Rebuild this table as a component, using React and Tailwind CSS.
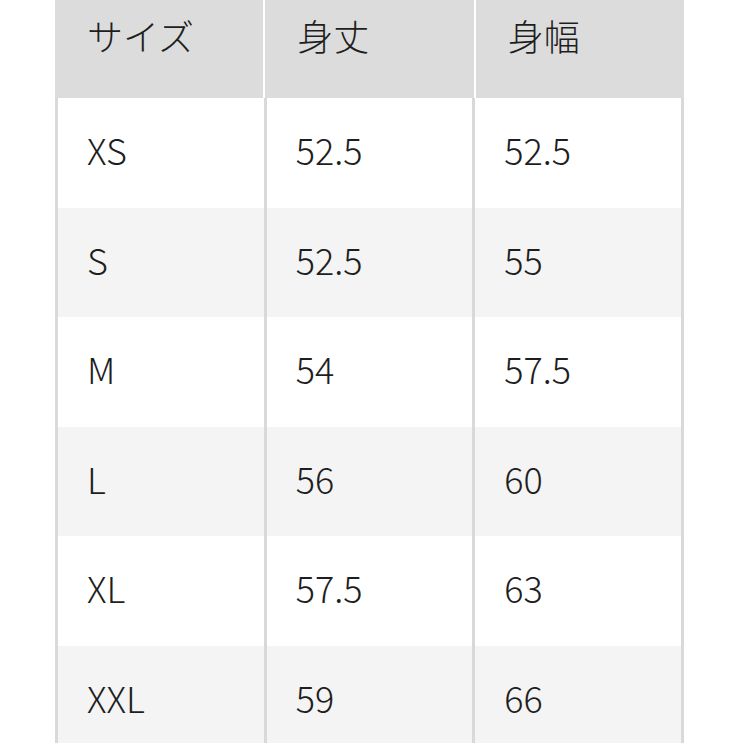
export default function App() {
  const rows = [
    ["XS", "52.5", "52.5"],
    ["S", "52.5", "55"],
    ["M", "54", "57.5"],
    ["L", "56", "60"],
    ["XL", "57.5", "63"],
    ["XXL", "59", "66"],
  ];
  const font = { fontFamily: '"Noto Sans CJK JP", "Noto Sans", sans-serif' };
  return (
    <div className="w-[743px] h-[743px] overflow-hidden bg-white" style={font}>
      <div className="ml-[55px] w-[629px] text-[36px] leading-none font-light text-[#1e1e1e]">
        <div className="grid grid-cols-3 gap-x-[2px] h-[98px] bg-white">
          {["サイズ", "身丈", "身幅"].map((h) => (
            <div key={h} className="bg-[#dcdcdc] pl-[32px] pt-[17px]">
              {h}
            </div>
          ))}
        </div>
        <div className="grid grid-cols-3 gap-x-[3px] px-[3px] bg-[#d9d9d9]">
          {rows.map((r, i) =>
            r.map((c, j) => (
              <div
                key={i + "-" + j}
                className={
                  "h-[109.5px] flex items-center pl-[29px] pb-[7px] " +
                  (i % 2 === 0 ? "bg-white" : "bg-[#f4f4f4]")
                }
              >
                {c}
              </div>
            ))
          )}
        </div>
      </div>
    </div>
  );
}
